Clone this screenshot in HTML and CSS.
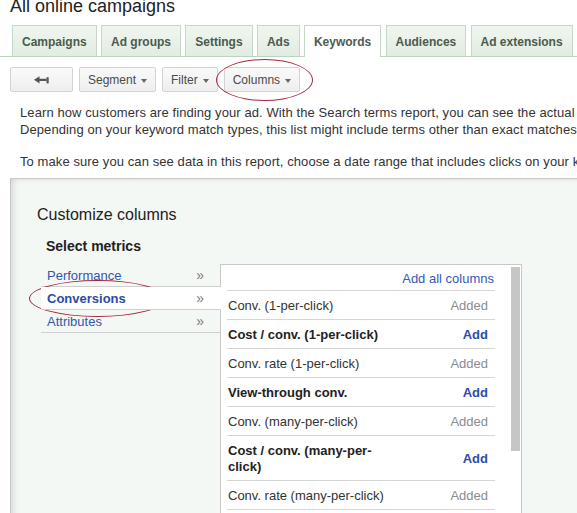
FILE: index.html
```html
<!DOCTYPE html>
<html>
<head>
<meta charset="utf-8">
<link rel="stylesheet" href="styles.css">
</head>
<body>
<div class="page">
  <h1 class="title">All online campaigns</h1>
  <div class="tabs">
    <div class="tab">Campaigns</div>
    <div class="tab">Ad groups</div>
    <div class="tab">Settings</div>
    <div class="tab">Ads</div>
    <div class="tab active">Keywords</div>
    <div class="tab">Audiences</div>
    <div class="tab">Ad extensions</div>
  </div>
  <div class="toolbar">
    <button class="btn btn-back" type="button">
      <svg width="15" height="8" viewBox="0 0 15 8"><path d="M0 3.8 L5.5 0.2 V2.7 H12.5 V4.9 H5.5 V7.4 Z" fill="#555"/><rect x="12.5" y="1.2" width="2.2" height="6.2" fill="#555"/></svg>
    </button>
    <button class="btn" type="button">Segment <span class="caret"></span></button>
    <button class="btn" type="button">Filter <span class="caret"></span></button>
    <button class="btn" type="button">Columns <span class="caret"></span></button>
  </div>
  <div class="intro">
    <p>Learn how customers are finding your ad. With the Search terms report, you can see the actual search terms people entered on Google.<br>Depending on your keyword match types, this list might include terms other than exact matches to your keywords.</p>
    <p class="second">To make sure you can see data in this report, choose a date range that includes clicks on your keywords.</p>
  </div>
  <div class="panel">
    <div class="panel-title">Customize columns</div>
    <div class="section-title">Select metrics</div>
    <div class="chooser">
      <ul class="nav">
        <li class="nav-item"><span>Performance</span><span class="chev">&raquo;</span></li>
        <li class="nav-item selected"><span>Conversions</span><span class="chev">&raquo;</span></li>
        <li class="nav-item"><span>Attributes</span><span class="chev">&raquo;</span></li>
      </ul>
      <div class="pane">
        <div class="list">
          <div class="list-head"><span class="link">Add all columns</span></div>
          <div class="row"><span class="label">Conv. (1-per-click)</span><span class="added">Added</span></div>
          <div class="row strong"><span class="label">Cost / conv. (1-per-click)</span><span class="add">Add</span></div>
          <div class="row"><span class="label">Conv. rate (1-per-click)</span><span class="added">Added</span></div>
          <div class="row strong"><span class="label">View-through conv.</span><span class="add">Add</span></div>
          <div class="row"><span class="label">Conv. (many-per-click)</span><span class="added">Added</span></div>
          <div class="row strong"><span class="label">Cost / conv. (many-per-click)</span><span class="add">Add</span></div>
          <div class="row"><span class="label">Conv. rate (many-per-click)</span><span class="added">Added</span></div>
        </div>
        <div class="scrollbar"><div class="thumb"></div></div>
      </div>
    </div>
  </div>
  <div class="annot annot-columns"></div>
  <div class="annot annot-conv"></div>
</div>
</body>
</html>
```

FILE: styles.css
```css
html, body {
  margin: 0;
  padding: 0;
  background: #fff;
  overflow: hidden;
}
body {
  font-family: "Liberation Sans", Arial, sans-serif;
  color: #333;
}
.page {
  position: relative;
  width: 577px;
  height: 513px;
  overflow: hidden;
}
.title {
  margin: -5px 0 0 10px;
  height: 22px;
  font-size: 18px;
  line-height: 22px;
  font-weight: normal;
  color: #222;
  white-space: nowrap;
}
.tabs {
  display: flex;
  align-items: flex-end;
  gap: 4.3px;
  margin-top: 8px;
  padding-left: 12px;
  height: 31px;
  border-bottom: 1px solid #bcd2bc;
}
.tab {
  box-sizing: border-box;
  height: 31px;
  padding: 2px 9px 0;
  line-height: 29px;
  border: 1px solid #c6d9c6;
  border-bottom: none;
  font-size: 12px;
  font-weight: bold;
  color: #4b5b4b;
  background: linear-gradient(#eff6ef, #e2ece2);
  white-space: nowrap;
}
.tab.active {
  background: #fff;
  height: 32px;
  margin-bottom: -1px;
  color: #4f5a4f;
}
.toolbar {
  display: flex;
  gap: 6px;
  margin: 10px 0 0 10px;
}
.btn {
  box-sizing: border-box;
  height: 25px;
  padding: 1px 8px 0;
  border: 1px solid #d3d3d3;
  border-radius: 2px;
  background: linear-gradient(#fafafa, #eeeeee);
  font-family: "Liberation Sans", Arial, sans-serif;
  font-size: 12px;
  color: #4a4a4a;
  display: flex;
  align-items: center;
  gap: 5px;
  margin: 0;
}
.btn-back {
  width: 63px;
  justify-content: center;
}
.caret {
  width: 0;
  height: 0;
  border-left: 3.5px solid transparent;
  border-right: 3.5px solid transparent;
  border-top: 4px solid #666;
  margin-top: 1px;
}
.intro {
  margin: 12px 0 0 20px;
  font-size: 13px;
  line-height: 17px;
  color: #333;
  white-space: nowrap;
  letter-spacing: 0.09px;
}
.intro p {
  margin: 0;
}
.intro p.second {
  margin-top: 15px;
}
.panel {
  margin: 8px 0 0 10px;
  height: 400px;
  border-top: 1px solid #cacaca;
  border-left: 1px solid #c4c4c4;
  background: #f4f8f4;
  box-shadow: inset 7px 0 7px -5px rgba(0, 0, 0, 0.13), inset 0 5px 5px -5px rgba(0, 0, 0, 0.12);
  padding: 26px 0 0 26px;
}
.panel-title {
  font-size: 16px;
  line-height: 20px;
  color: #222;
}
.section-title {
  margin: 12px 0 0 9px;
  font-size: 14px;
  line-height: 18px;
  font-weight: bold;
  color: #222;
}
.chooser {
  display: flex;
  align-items: flex-start;
  margin: 9px 0 0 4px;
}
.nav {
  width: 179px;
  margin: 0;
  padding: 0;
  list-style: none;
}
.nav-item {
  display: flex;
  justify-content: space-between;
  box-sizing: border-box;
  height: 23px;
  padding: 1px 16px 0 6px;
  line-height: 21px;
  border-bottom: 1px solid #cfcfcf;
  font-size: 13px;
  color: #3556ad;
}
.nav-item.selected {
  background: #fff;
  font-weight: bold;
  color: #2b4ba6;
  margin-right: -1px;
  padding-right: 17px;
  position: relative;
  z-index: 1;
}
.chev {
  font-size: 14px;
  font-weight: normal;
  color: #7a7a7a;
}
.pane {
  display: flex;
  width: 300px;
  height: 300px;
  border: 1px solid #c8c8c8;
  border-bottom: none;
  background: #fff;
}
.list {
  width: 268px;
  margin-left: 6px;
}
.list-head {
  box-sizing: border-box;
  height: 26px;
  display: flex;
  justify-content: flex-end;
  align-items: center;
  padding: 2px 1px 0 0;
  border-bottom: 1px solid #d6d6d6;
  font-size: 13px;
}
.link {
  color: #3758b3;
}
.row {
  display: flex;
  justify-content: space-between;
  align-items: center;
  padding: 7px 7px 5px 1px;
  line-height: 16px;
  border-bottom: 1px solid #d6d6d6;
  font-size: 13px;
  color: #333;
}
.row.strong .label {
  font-weight: bold;
  color: #222;
}
.label {
  max-width: 165px;
}
.added {
  color: #8c8c8c;
}
.add {
  color: #2d4ca8;
  font-weight: bold;
}
.scrollbar {
  width: 9px;
  margin-left: 16px;
}
.thumb {
  margin-top: 2px;
  height: 184px;
  background: #c6c6c6;
}
.annot {
  position: absolute;
  border: 1px solid #a3283a;
  border-radius: 50%;
  box-sizing: border-box;
}
.annot-columns {
  left: 216px;
  top: 59px;
  width: 97px;
  height: 42px;
}
.annot-conv {
  left: 29px;
  top: 280px;
  width: 137px;
  height: 37px;
}
```
